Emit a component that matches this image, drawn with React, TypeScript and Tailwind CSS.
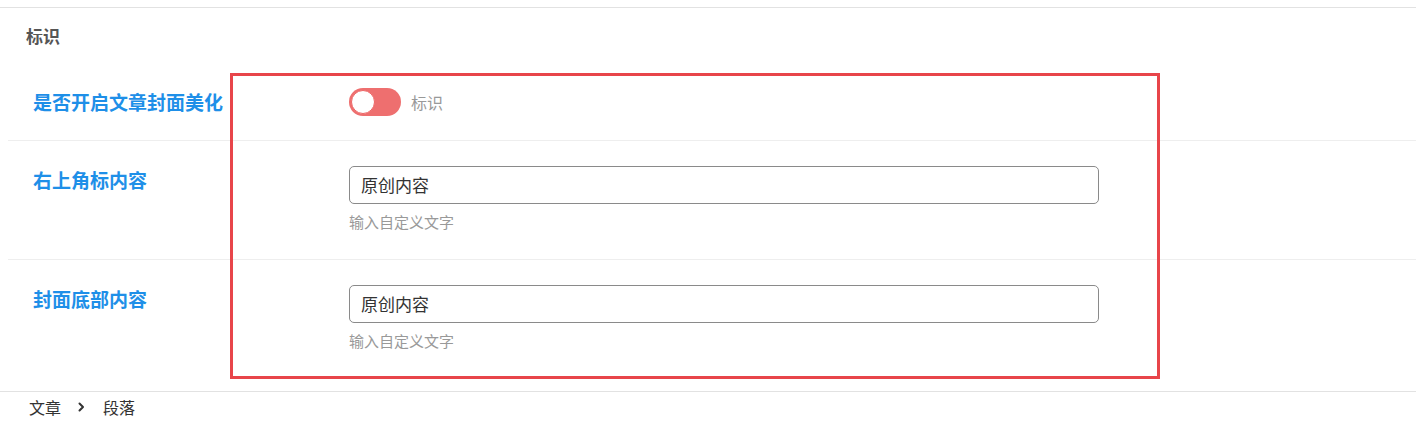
const font = { fontFamily: '"Noto Sans CJK SC", "Noto Sans", sans-serif' };

function Toggle({ label }: { label: string }) {
  return (
    <div className="flex items-center gap-[10px] h-[28px]">
      <div className="relative w-[52px] h-[28px] rounded-full bg-[#ee6f6f]">
        <div className="absolute left-[2px] top-[2px] w-[24px] h-[24px] rounded-full bg-white border border-[#e66]" />
      </div>
      <span className="text-[16px] leading-[28px] text-[#999]">{label}</span>
    </div>
  );
}

function TextField({ value, help }: { value: string; help: string }) {
  return (
    <div className="flex flex-col">
      <div className="w-[750px] h-[38px] rounded-[5px] border border-[#8a8a8a] bg-white px-[11px] flex items-center text-[17px] text-[#333]">
        {value}
      </div>
      <p className="mt-[8px] text-[15px] leading-[20px] text-[#999]">{help}</p>
    </div>
  );
}

function Row({ label, children, className }: { label: string; children: React.ReactNode; className: string }) {
  return (
    <div className={`flex items-start ml-[8px] ${className}`}>
      <div className="w-[341px] pl-[25px] text-[19px] leading-[28px] font-bold text-[#1e8fe8]">{label}</div>
      <div>{children}</div>
    </div>
  );
}

export default function App() {
  return (
    <div className="relative w-[1416px] h-[421px] bg-white overflow-hidden" style={font}>
      <div className="h-[8px] border-b border-[#e2e2e2]" />
      <div className="h-[54px] pl-[26px] pt-[16px]">
        <h2 className="text-[17px] leading-[24px] font-semibold text-[#555]">标识</h2>
      </div>

      <Row label="是否开启文章封面美化" className="pt-[26px] h-[79px] border-b border-[#eeeeee]">
        <Toggle label="标识" />
      </Row>

      <Row label="右上角标内容" className="pt-[25px] h-[119px] border-b border-[#eeeeee]">
        <TextField value="原创内容" help="输入自定义文字" />
      </Row>

      <Row label="封面底部内容" className="pt-[25px] h-[131px]">
        <TextField value="原创内容" help="输入自定义文字" />
      </Row>

      <div className="border-t border-[#e2e2e2] h-[30px] pl-[29px] flex items-center text-[16px] text-[#333]">
        <span>文章</span>
        <svg className="ml-[17px] mr-[18px]" width="7" height="10" viewBox="0 0 7 10" fill="none">
          <path d="M1.5 1.5 L5 5 L1.5 8.5" stroke="#333" strokeWidth="2" strokeLinecap="round" strokeLinejoin="round" />
        </svg>
        <span>段落</span>
      </div>

      <div className="absolute left-[230px] top-[73px] w-[930px] h-[306px] border-[3px] border-[#e8454a] pointer-events-none" />
    </div>
  );
}
